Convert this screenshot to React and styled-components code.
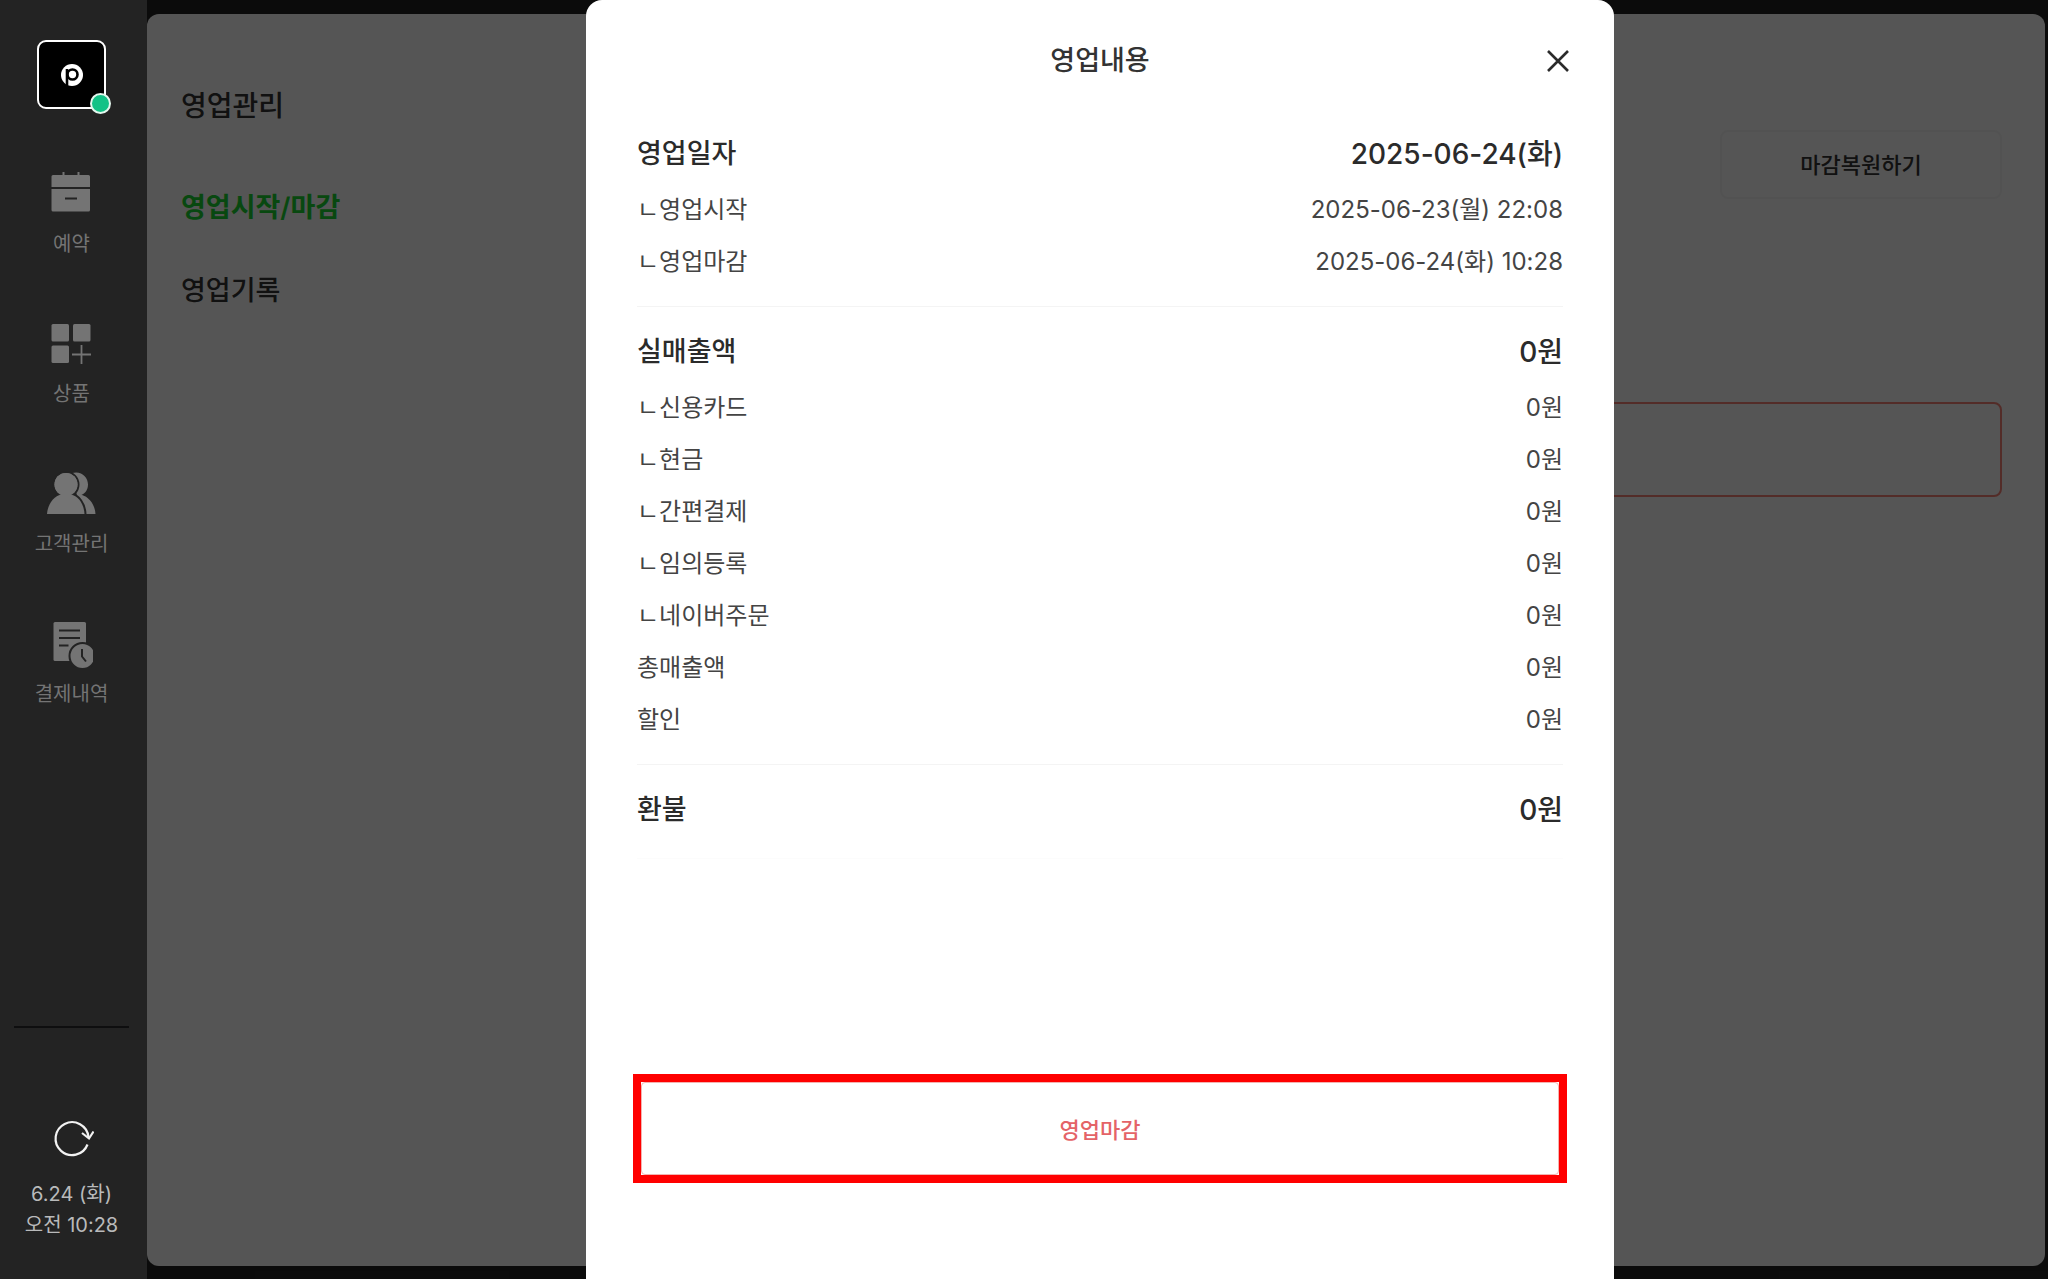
import React, { useState } from "react";
import styled, { createGlobalStyle } from "styled-components";

const GlobalStyle = createGlobalStyle`
  * {
    box-sizing: border-box;
  }

  body {
    margin: 0;
    background: #232323;
    color: #333;
    font-family: Inter, "Noto Sans CJK KR", sans-serif;
  }

  button {
    font-family: inherit;
    cursor: pointer;
  }
`;

const Layout = styled.div`
  display: grid;
  grid-template-columns: 147px 1fr;
  min-height: 100vh;
`;

/* ---------- sidebar ---------- */

const Sidebar = styled.aside`
  display: flex;
  flex-direction: column;
  align-items: center;
  padding: 40px 18px 38px 14px;
  background: #232323;
`;

const Profile = styled.button`
  position: relative;
  width: 69px;
  height: 69px;
  padding: 0;
  border: 2px solid #fff;
  border-radius: 9px;
  background: #000;

  svg {
    display: block;
    margin: auto;
  }
`;

const StatusDot = styled.span`
  position: absolute;
  right: -7px;
  bottom: -7px;
  width: 21px;
  height: 21px;
  border: 2px solid #e4f7ee;
  border-radius: 50%;
  background: #12c286;
`;

const Nav = styled.nav`
  display: flex;
  flex-direction: column;
  gap: 60px;
  margin-top: 61px;
`;

const NavLink = styled.a`
  display: flex;
  flex-direction: column;
  align-items: center;
  gap: 11px;
  height: 90px;
  color: #747474;
  font-size: 20px;
  line-height: 30px;
  text-decoration: none;
`;

const SidebarFooter = styled.div`
  display: flex;
  flex-direction: column;
  align-items: center;
  width: 100%;
  margin-top: auto;
  padding-top: 88px;
  border-top: 2px solid #0e0e0f;
  color: #b9babb;
  font-size: 20px;
  line-height: 31px;
  text-align: center;
`;

const RefreshButton = styled.button`
  width: 44px;
  height: 44px;
  margin-bottom: 19px;
  padding: 0;
  border: 0;
  background: none;
  color: #f2f2f2;
`;

/* ---------- page behind the modal ---------- */

const Main = styled.main`
  position: relative;
  display: flex;
  padding: 14px 3px 13px 0;
`;

const Panel = styled.div`
  display: flex;
  flex: 1;
  border-radius: 12px;
  background: #fff;
`;

const Menu = styled.nav`
  display: flex;
  flex-direction: column;
  width: 440px;
  padding: 72px 34px;
`;

const MenuTitle = styled.h1`
  margin: 0 0 62px;
  font-size: 28px;
  font-weight: 500;
  line-height: 40px;
`;

const MenuLink = styled.a`
  margin-bottom: 43px;
  color: ${(props) => (props.$active ? "#18d830" : "#333")};
  font-size: 27px;
  font-weight: ${(props) => (props.$active ? 600 : 500)};
  line-height: 40px;
  text-decoration: none;
`;

const Content = styled.section`
  display: flex;
  flex: 1;
  flex-direction: column;
  align-items: flex-end;
  gap: 203px;
  padding: 116px 43px;
`;

const RestoreButton = styled.button`
  width: 282px;
  height: 69px;
  padding: 0 0 4px;
  border: 2px solid #f7f7f7;
  border-radius: 8px;
  background: #fff;
  color: #333;
  font-size: 22px;
  font-weight: 500;
`;

const CloseShopButton = styled.button`
  width: 100%;
  height: 95px;
  border: 2px solid #f88478;
  border-radius: 8px;
  background: #fff;
  color: #e5484d;
  font-size: 22px;
`;

/* ---------- modal ---------- */

const Scrim = styled.div`
  position: absolute;
  inset: 0;
  display: flex;
  justify-content: center;
  padding-left: 5px;
  background: rgba(0, 0, 0, 0.667);
`;

const Modal = styled.div`
  display: flex;
  flex-direction: column;
  width: 1028px;
  max-width: 100%;
  padding: 0 47px 96px;
  border-radius: 16px 16px 0 0;
  background: #fff;
`;

const ModalHeader = styled.header`
  display: grid;
  grid-template-columns: 44px 1fr 44px;
  align-items: center;
  height: 109px;
  padding-top: 13px;
  margin-right: -13px;
  margin-left: -13px;
`;

const ModalTitle = styled.h2`
  grid-column: 2;
  margin: 0;
  font-size: 27px;
  font-weight: 500;
  line-height: 40px;
  text-align: center;
`;

const CloseButton = styled.button`
  width: 44px;
  height: 44px;
  padding: 0;
  border: 0;
  background: none;
  color: #2b2b2b;
`;

const Group = styled.dl`
  margin: 0 4px;
  padding: 25px 0 18px;
  border-bottom: 1px solid ${(props) => (props.$faint ? "#fcfcfc" : "#f4f4f4")};
`;

const Row = styled.div`
  display: flex;
  align-items: center;
  justify-content: space-between;
  height: 52px;
  color: #444;
  font-size: 24px;
  line-height: 36px;

  dd {
    margin: 0;
  }
`;

const HeadRow = styled(Row)`
  height: 40px;
  margin-bottom: 10px;
  color: #2b2b2b;
  font-size: 27px;
  font-weight: 500;

  dd {
    font-size: 28px;
  }
`;

const Highlight = styled.div`
  margin-top: auto;
  border: 8px solid #f00;
`;

const SubmitButton = styled.button`
  display: block;
  width: 100%;
  height: 93px;
  padding: 0 0 2px;
  border: 1px solid #f3b3b0;
  border-radius: 4px;
  background: #fff;
  color: #e46367;
  font-size: 22px;
  font-weight: 500;
`;

/* ---------- icons ---------- */

const LogoIcon = () => (
  <svg width="24" height="24" viewBox="0 0 24 24" fill="none" aria-hidden="true">
    <circle cx="12" cy="12" r="11" fill="#fff" />
    <circle cx="12.5" cy="11.5" r="5" stroke="#000" strokeWidth="2.6" />
    <path d="M7 6v18" stroke="#000" strokeWidth="2.6" />
  </svg>
);

const CalendarIcon = () => (
  <svg width="40" height="48" viewBox="0 0 40 48" fill="currentColor" aria-hidden="true">
    <path d="M11.5 2h2v4h-2zM26.5 2h2v4h-2z" />
    <path d="M2 5h35.500A1.500 1.500 0 0 1 39 6.500V17H.5V6.500A1.500 1.500 0 0 1 2 5z" />
    <path d="M.5 19H39v21a1.500 1.500 0 0 1-1.500 1.500H2A1.500 1.500 0 0 1 .5 40z" />
    <path d="M14 28.500h12" stroke="#232323" strokeWidth="2" />
  </svg>
);

const ProductIcon = () => (
  <svg width="40" height="48" viewBox="0 0 40 48" fill="currentColor" aria-hidden="true">
    <rect x="0.500" y="4" width="17.500" height="17.500" rx="1.500" />
    <rect x="22" y="4" width="17.500" height="17.500" rx="1.500" />
    <rect x="0.500" y="25.500" width="17.500" height="17.500" rx="1.500" />
    <path d="M30.500 25v19M21 34.500h19" stroke="currentColor" strokeWidth="1.800" />
  </svg>
);

const CustomerIcon = () => (
  <svg width="50" height="48" viewBox="0 0 50 48" fill="currentColor" aria-hidden="true">
    <path d="M26 3c9.500-2.500 16 4 16 11.500 0 5-2.500 8.800-6.500 10.300C43 27 49 34.500 49.500 44H35z" />
    <g stroke="#232323" strokeWidth="4" paintOrder="stroke">
      <circle cx="20" cy="14.500" r="11.500" />
      <path d="M1 44c.7-10.500 7.500-18 14-19.500h10C32 26 38 33.500 38.500 44z" />
    </g>
    <circle cx="20" cy="14.500" r="11.500" />
    <path d="M15 22h10v5H15z" />
  </svg>
);

const ReceiptIcon = () => (
  <svg width="44" height="48" viewBox="0 0 44 48" fill="currentColor" aria-hidden="true">
    <rect x="4.500" y="2" width="32.500" height="39" rx="1.500" />
    <path d="M10 10.500h21M10 18h21M10 25.500h9.500" stroke="#232323" strokeWidth="2" />
    <circle cx="33.500" cy="36" r="13" stroke="#232323" strokeWidth="2" />
    <path d="M33 29v7.500l4 5" stroke="#232323" strokeWidth="2" fill="none" />
  </svg>
);

const RefreshIcon = () => (
  <svg width="44" height="44" viewBox="0 0 44 44" fill="none" stroke="currentColor" strokeWidth="2.200" aria-hidden="true">
    <path d="M37.500 28.500A16.500 16.500 0 1 1 38.500 21" />
    <path d="M32 17l7 5.500 4.500-7" />
  </svg>
);

const CloseIcon = () => (
  <svg width="44" height="44" viewBox="0 0 44 44" fill="none" stroke="currentColor" strokeWidth="2.600" aria-hidden="true">
    <path d="M12 12l20 20M32 12L12 32" />
  </svg>
);

/* ---------- data ---------- */

const navItems = [
  { label: "예약", icon: <CalendarIcon /> },
  { label: "상품", icon: <ProductIcon /> },
  { label: "고객관리", icon: <CustomerIcon /> },
  { label: "결제내역", icon: <ReceiptIcon /> },
];

const groups = [
  {
    title: "영업일자",
    total: "2025-06-24(화)",
    rows: [
      ["ㄴ영업시작", "2025-06-23(월) 22:08"],
      ["ㄴ영업마감", "2025-06-24(화) 10:28"],
    ],
  },
  {
    title: "실매출액",
    total: "0원",
    rows: [
      ["ㄴ신용카드", "0원"],
      ["ㄴ현금", "0원"],
      ["ㄴ간편결제", "0원"],
      ["ㄴ임의등록", "0원"],
      ["ㄴ네이버주문", "0원"],
      ["총매출액", "0원"],
      ["할인", "0원"],
    ],
  },
  { title: "환불", total: "0원", rows: [] },
];

function BusinessModal({ onClose }) {
  return (
    <Scrim>
      <Modal role="dialog" aria-modal="true" aria-labelledby="modal-title">
        <ModalHeader>
          <ModalTitle id="modal-title">영업내용</ModalTitle>
          <CloseButton type="button" aria-label="닫기" onClick={onClose}>
            <CloseIcon />
          </CloseButton>
        </ModalHeader>
        {groups.map((group) => (
          <Group key={group.title} $faint={group.rows.length === 0}>
            <HeadRow>
              <dt>{group.title}</dt>
              <dd>{group.total}</dd>
            </HeadRow>
            {group.rows.map(([label, value]) => (
              <Row key={label}>
                <dt>{label}</dt>
                <dd>{value}</dd>
              </Row>
            ))}
          </Group>
        ))}
        <Highlight>
          <SubmitButton type="button">영업마감</SubmitButton>
        </Highlight>
      </Modal>
    </Scrim>
  );
}

function App() {
  const [open, setOpen] = useState(true);

  return (
    <>
      <GlobalStyle />
      <Layout>
        <Sidebar>
          <Profile type="button" aria-label="프로필">
            <LogoIcon />
            <StatusDot />
          </Profile>
          <Nav>
            {navItems.map((item) => (
              <NavLink key={item.label} href="#">
                {item.icon}
                {item.label}
              </NavLink>
            ))}
          </Nav>
          <SidebarFooter>
            <RefreshButton type="button" aria-label="새로고침">
              <RefreshIcon />
            </RefreshButton>
            <div>6.24 (화)</div>
            <div>오전 10:28</div>
          </SidebarFooter>
        </Sidebar>
        <Main>
          <Panel>
            <Menu>
              <MenuTitle>영업관리</MenuTitle>
              <MenuLink href="#" $active>
                영업시작/마감
              </MenuLink>
              <MenuLink href="#">영업기록</MenuLink>
            </Menu>
            <Content>
              <RestoreButton type="button" onClick={() => setOpen(true)}>
                마감복원하기
              </RestoreButton>
              <CloseShopButton type="button" aria-label="영업마감" />
            </Content>
          </Panel>
          {open && <BusinessModal onClose={() => setOpen(false)} />}
        </Main>
      </Layout>
    </>
  );
}

export default App;
